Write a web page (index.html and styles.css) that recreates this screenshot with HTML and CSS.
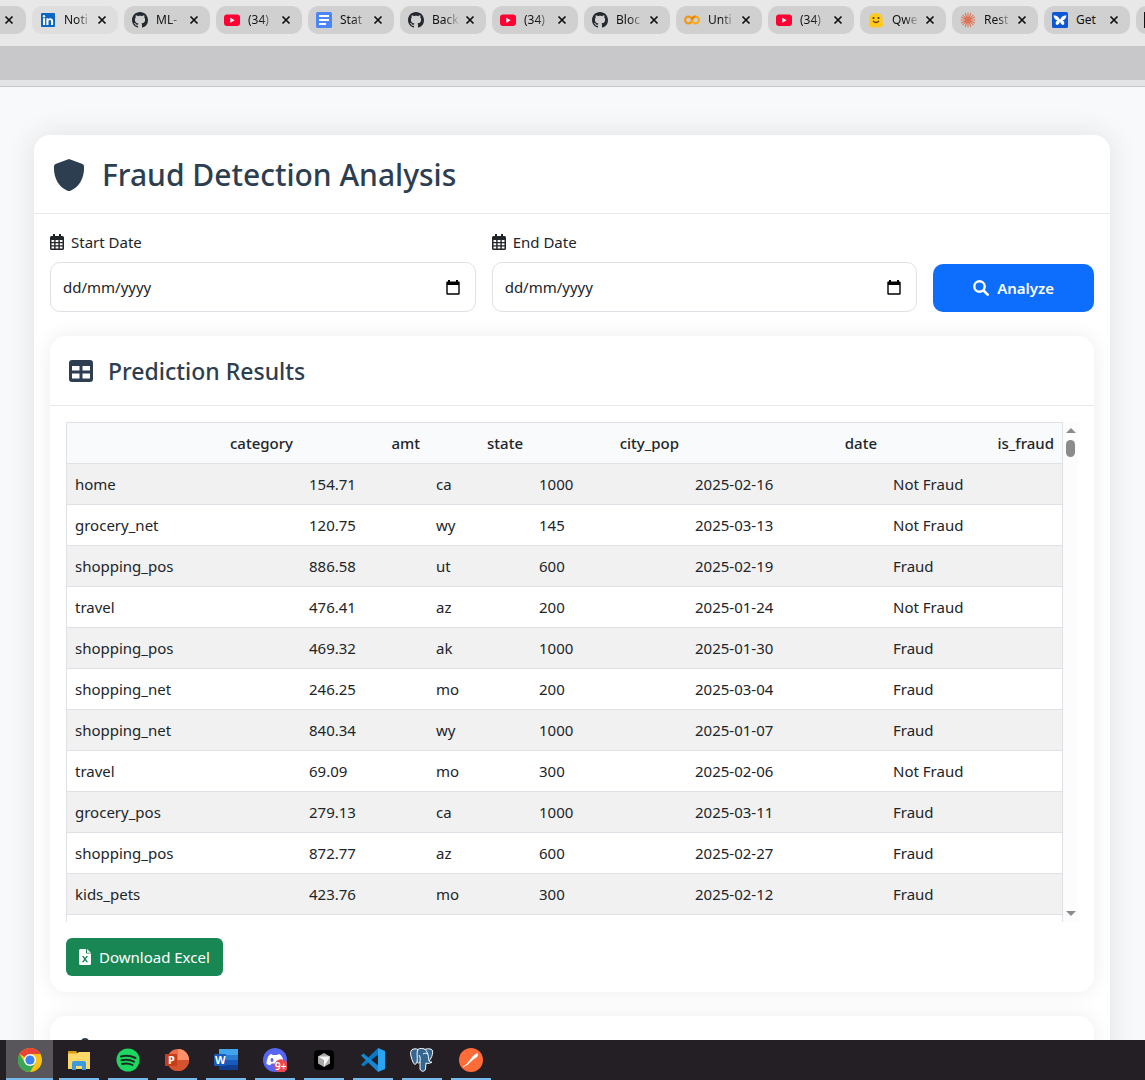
FILE: index.html
```html
<!DOCTYPE html>
<html lang="en">
<head>
<meta charset="utf-8">
<meta name="viewport" content="width=device-width, initial-scale=1">
<title>Fraud Detection Analysis</title>
<link rel="stylesheet" href="styles.css">
</head>
<body>
<svg class="defs" aria-hidden="true">
  <symbol id="close" viewBox="0 0 10 10"><path d="M1.500 1.500l7 7M8.500 1.500l-7 7" stroke="#111" stroke-width="1.700" fill="none"/></symbol>
  <symbol id="github" viewBox="0 0 16 16"><path fill="#24292f" d="M8 0C3.58 0 0 3.58 0 8c0 3.54 2.29 6.53 5.47 7.59.4.07.55-.17.55-.38 0-.19-.01-.82-.01-1.49-2.01.37-2.53-.49-2.69-.94-.09-.23-.48-.94-.82-1.13-.28-.15-.68-.52-.01-.53.63-.01 1.08.58 1.23.82.72 1.21 1.87.87 2.33.66.07-.52.28-.87.51-1.07-1.78-.2-3.64-.89-3.64-3.95 0-.87.31-1.59.82-2.15-.08-.2-.36-1.02.08-2.12 0 0 .67-.21 2.2.82.64-.18 1.32-.27 2-.27s1.36.09 2 .27c1.53-1.04 2.2-.82 2.2-.82.44 1.1.16 1.92.08 2.12.51.56.82 1.27.82 2.15 0 3.07-1.87 3.75-3.65 3.95.29.25.54.73.54 1.48 0 1.07-.01 1.93-.01 2.2 0 .21.15.46.55.38A8 8 0 0 0 16 8c0-4.42-3.58-8-8-8z"/></symbol>
  <symbol id="youtube" viewBox="0 0 16 16"><rect y="2.500" width="16" height="11.500" rx="3" fill="#f03"/><path d="M6.300 5.800v5l4.300-2.500z" fill="#fff"/></symbol>
  <symbol id="calendar" viewBox="0 0 15 16"><path fill="#212529" fill-rule="evenodd" d="M3 0h2v2h4V0h2v2h1.500A1.500 1.500 0 0 1 14 3.500v11a1.500 1.500 0 0 1-1.500 1.500h-11A1.500 1.500 0 0 1 0 14.500v-11A1.500 1.500 0 0 1 1.500 2H3zM1.500 6v2h2.700V6zm4.100 0v2h2.800V6zm4.200 0v2h2.700V6zM1.500 9.200v2h2.700v-2zm4.100 0v2h2.800v-2zm4.200 0v2h2.700v-2zM1.500 12.400v2.100h2.700v-2.100zm4.100 0v2.100h2.800v-2.100zm4.200 0v2.100h2.700v-2.100z"/></symbol>
  <symbol id="picker" viewBox="0 0 14 15"><path fill="#000" fill-rule="evenodd" d="M2 0h2v1.500h6V0h2v1.500h.5A1.200 1.200 0 0 1 13.700 3v10.500a1.200 1.200 0 0 1-1.200 1.200h-11A1.200 1.200 0 0 1 .3 13.500V3a1.200 1.200 0 0 1 1.200-1.500H2zM1.700 5v8.300h10.600V5z"/></symbol>
</svg>
<div class="screen">
  <header class="browser">
    <nav class="tabs" aria-label="Browser tabs">
      <div class="tab tab-first"><button class="close" aria-label="Close tab"><svg><use href="#close"/></svg></button></div>
      <div class="tab tab-light"><svg class="fav" viewBox="0 0 16 16"><rect x="1" y="1" width="14" height="14" rx="1" fill="#0a66c2"/><path fill="#fff" d="M3 6.300h2.100V13H3zM6.400 6.300h2v1c1-1.600 4.700-1.600 4.700 1.700v4H11V9.500c0-2-2.500-1.800-2.500 0V13H6.400z"/><circle cx="4" cy="4.200" r="1.200" fill="#fff"/></svg><span class="label">Noti</span><button class="close" aria-label="Close tab"><svg><use href="#close"/></svg></button></div>
      <div class="tab"><svg class="fav"><use href="#github"/></svg><span class="label">ML-</span><button class="close" aria-label="Close tab"><svg><use href="#close"/></svg></button></div>
      <div class="tab"><svg class="fav"><use href="#youtube"/></svg><span class="label">(34)</span><button class="close" aria-label="Close tab"><svg><use href="#close"/></svg></button></div>
      <div class="tab"><svg class="fav" viewBox="0 0 16 16"><rect width="16" height="16" rx="1.500" fill="#4a86f7"/><path d="M3 4h10M3 8h10M3 12h7" stroke="#fff" stroke-width="1.800"/></svg><span class="label">Stat</span><button class="close" aria-label="Close tab"><svg><use href="#close"/></svg></button></div>
      <div class="tab"><svg class="fav"><use href="#github"/></svg><span class="label">Back</span><button class="close" aria-label="Close tab"><svg><use href="#close"/></svg></button></div>
      <div class="tab"><svg class="fav"><use href="#youtube"/></svg><span class="label">(34)</span><button class="close" aria-label="Close tab"><svg><use href="#close"/></svg></button></div>
      <div class="tab"><svg class="fav"><use href="#github"/></svg><span class="label">Bloc</span><button class="close" aria-label="Close tab"><svg><use href="#close"/></svg></button></div>
      <div class="tab"><svg class="fav" viewBox="0 0 16 16"><g fill="none" stroke-width="2.200"><circle cx="4.500" cy="8" r="3.400" stroke="#f0971b"/><circle cx="11.500" cy="8" r="3.400" stroke="#f9ab1e"/><path d="M8.100 8a3.400 3.400 0 0 1 3.400-3.400" stroke="#e8810a"/></g></svg><span class="label">Unti</span><button class="close" aria-label="Close tab"><svg><use href="#close"/></svg></button></div>
      <div class="tab"><svg class="fav"><use href="#youtube"/></svg><span class="label">(34)</span><button class="close" aria-label="Close tab"><svg><use href="#close"/></svg></button></div>
      <div class="tab"><svg class="fav" viewBox="0 0 16 16"><path d="M1 14c-1-2 0-3 .5-4C0 4 4 1 8 1s8 3 6.500 9c.5 1 1.500 2 .5 4-3 2-11 2-14 0z" fill="#ffca1d"/><circle cx="5.500" cy="6" r="1" fill="#3a3020"/><circle cx="10.500" cy="6" r="1" fill="#3a3020"/><path d="M5 9q3 3 6 0" fill="none" stroke="#6b3b20" stroke-width="1.300"/></svg><span class="label">Qwe</span><button class="close" aria-label="Close tab"><svg><use href="#close"/></svg></button></div>
      <div class="tab"><svg class="fav" viewBox="0 0 16 16"><path d="M8 .5v15M.5 8h15M2.500 2.800l11 10.400M13.500 2.800l-11 10.400M5 1l6 14M11 1L5 15M1 5l14 6M15 5L1 11" stroke="#de7356" stroke-width="1.100"/></svg><span class="label">Rest</span><button class="close" aria-label="Close tab"><svg><use href="#close"/></svg></button></div>
      <div class="tab"><svg class="fav" viewBox="0 0 16 16"><rect width="16" height="16" rx="1.500" fill="#1057d3"/><path fill="#fff" d="M8 8C7 4 3 3 1.500 3.500 2 6 3 8 5.500 8.500 3.500 9 3 11 4.500 13 6.500 13 8 11 8 9c0 2 1.500 4 3.500 4 1.500-2 1-4-1-4.500C13 8 14 6 14.500 3.500 13 3 9 4 8 8z"/></svg><span class="label label-full">Get</span><button class="close" aria-label="Close tab"><svg><use href="#close"/></svg></button></div>
      <div class="tab"><svg class="fav" viewBox="0 0 16 16"><rect width="16" height="16" fill="#161616"/></svg></div>
    </nav>
    <div class="toolbar"></div>
    <div class="bookmarks"></div>
  </header>

  <main class="page">
    <section class="card main-card">
      <div class="card-head">
        <svg class="shield" viewBox="0 0 32 32"><path fill="#2c3e50" d="M16 0l13.500 5A2.500 2.500 0 0 1 31 7.500C31.500 18 27 28 17.500 31.700a4 4 0 0 1-3 0C5 28 .5 18 1 7.500A2.500 2.500 0 0 1 2.500 5z"/></svg>
        <h1>Fraud Detection Analysis</h1>
      </div>
      <div class="card-body">
        <form class="filters">
          <div class="field">
            <label for="start"><svg class="cal"><use href="#calendar"/></svg>Start Date</label>
            <div class="control"><input id="start" type="text" placeholder="dd/mm/yyyy"><button type="button" class="pick" aria-label="Open start date calendar"><svg><use href="#picker"/></svg></button></div>
          </div>
          <div class="field">
            <label for="end"><svg class="cal"><use href="#calendar"/></svg>End Date</label>
            <div class="control"><input id="end" type="text" placeholder="dd/mm/yyyy"><button type="button" class="pick" aria-label="Open end date calendar"><svg><use href="#picker"/></svg></button></div>
          </div>
          <button type="button" class="analyze"><svg viewBox="0 0 16 16"><circle cx="6.500" cy="6.500" r="5.200" fill="none" stroke="#fff" stroke-width="2.400"/><path d="M10.500 10.500l4.200 4.200" stroke="#fff" stroke-width="2.600" stroke-linecap="round"/></svg>Analyze</button>
        </form>

        <section class="card results">
          <div class="card-head sub-head">
            <svg class="grid-icon" viewBox="0 0 24 22"><path fill="#2c3e50" fill-rule="evenodd" d="M3 0h18a3 3 0 0 1 3 3v16a3 3 0 0 1-3 3H3a3 3 0 0 1-3-3V3a3 3 0 0 1 3-3zM3 6v4.500h7.500V6zm10.500 0v4.500H21V6zM3 13.500v5h7.500v-5zm10.500 0v5H21v-5z"/></svg>
            <h2>Prediction Results</h2>
          </div>
          <div class="card-body">
            <div class="scroller">
              <div class="viewport">
                <table>
                  <colgroup><col class="c-category"><col class="c-amt"><col class="c-state"><col class="c-pop"><col class="c-date"><col class="c-fraud"></colgroup>
                  <thead><tr><th>category</th><th>amt</th><th>state</th><th>city_pop</th><th>date</th><th>is_fraud</th></tr></thead>
                  <tbody>
                    <tr><td>home</td><td>154.71</td><td>ca</td><td>1000</td><td>2025-02-16</td><td>Not Fraud</td></tr>
                    <tr><td>grocery_net</td><td>120.75</td><td>wy</td><td>145</td><td>2025-03-13</td><td>Not Fraud</td></tr>
                    <tr><td>shopping_pos</td><td>886.58</td><td>ut</td><td>600</td><td>2025-02-19</td><td>Fraud</td></tr>
                    <tr><td>travel</td><td>476.41</td><td>az</td><td>200</td><td>2025-01-24</td><td>Not Fraud</td></tr>
                    <tr><td>shopping_pos</td><td>469.32</td><td>ak</td><td>1000</td><td>2025-01-30</td><td>Fraud</td></tr>
                    <tr><td>shopping_net</td><td>246.25</td><td>mo</td><td>200</td><td>2025-03-04</td><td>Fraud</td></tr>
                    <tr><td>shopping_net</td><td>840.34</td><td>wy</td><td>1000</td><td>2025-01-07</td><td>Fraud</td></tr>
                    <tr><td>travel</td><td>69.09</td><td>mo</td><td>300</td><td>2025-02-06</td><td>Not Fraud</td></tr>
                    <tr><td>grocery_pos</td><td>279.13</td><td>ca</td><td>1000</td><td>2025-03-11</td><td>Fraud</td></tr>
                    <tr><td>shopping_pos</td><td>872.77</td><td>az</td><td>600</td><td>2025-02-27</td><td>Fraud</td></tr>
                    <tr><td>kids_pets</td><td>423.76</td><td>mo</td><td>300</td><td>2025-02-12</td><td>Fraud</td></tr>
                    <tr><td></td><td></td><td></td><td></td><td></td><td></td></tr>
                  </tbody>
                </table>
              </div>
              <div class="scrollbar" aria-hidden="true">
                <svg class="arrow" viewBox="0 0 10 5"><path d="M5 0l5 5H0z" fill="#8b8b8b"/></svg>
                <div class="thumb"></div>
                <svg class="arrow arrow-down" viewBox="0 0 10 5"><path d="M0 0h10L5 5z" fill="#8b8b8b"/></svg>
              </div>
            </div>
            <button type="button" class="download"><svg viewBox="0 0 12 16"><path fill="#fff" fill-rule="evenodd" d="M1.500 0H7v4.500h5v10A1.500 1.500 0 0 1 10.500 16h-9A1.500 1.500 0 0 1 0 14.500v-13A1.500 1.500 0 0 1 1.500 0zM8 0l4 3.700H8zM3 7l2.100 3L3 13.300h1.700L6 11.200l1.300 2.100H9L6.900 10 9 7H7.300L6 8.900 4.700 7z"/></svg>Download Excel</button>
          </div>
        </section>

        <section class="card">
          <div class="card-head sub-head">
            <svg class="bulb" viewBox="0 0 30 30"><path fill="#2c3e50" d="M12 6a4 4 0 0 1 8 0l7 9v12H5V15z"/></svg>
          </div>
        </section>
      </div>
    </section>
  </main>

  <footer class="taskbar">
    <button class="app active" aria-label="Chrome"><svg viewBox="0 0 24 24"><circle cx="12" cy="12" r="12" fill="#fbc116"/><path d="M12 12L1.600 6A12 12 0 0 1 22.400 6H12z" fill="#ea4335"/><path d="M1.600 6A12 12 0 0 0 12 24l5.200-9L12 12l-5.200 3z" fill="#34a853"/><circle cx="12" cy="12" r="6" fill="#fff"/><circle cx="12" cy="12" r="4.600" fill="#3b82f0"/></svg></button>
    <button class="app" aria-label="File Explorer"><svg viewBox="0 0 24 24"><path d="M1 3h8l2 3H1z" fill="#d99c1a"/><path d="M1 5.500h9L12 4h11v17H1z" fill="#ffd968"/><path d="M5 22v-7q0-2 2-2h10q2 0 2 2v7h-4v-4H9v4z" fill="#3d9bdc"/></svg></button>
    <button class="app" aria-label="Spotify"><svg viewBox="0 0 24 24"><circle cx="12" cy="12" r="11.500" fill="#1ed760"/><path d="M5 8.500q7.500-2 14.500 1.500M5.500 12.300q7-1.800 12.500 1.300M6 16q6-1.500 10.500 1" fill="none" stroke="#1b2a20" stroke-width="2" stroke-linecap="round"/></svg></button>
    <button class="app" aria-label="PowerPoint"><svg viewBox="0 0 24 24"><circle cx="13" cy="12" r="11" fill="#ed6c47"/><path d="M13 1a11 11 0 0 1 11 11H13z" fill="#ff8f6b"/><path d="M2 12h22a11 11 0 0 1-22 0z" fill="#d35230"/><rect y="6" width="12" height="12" rx="1" fill="#c43e1c"/><text x="3" y="16" class="badge">P</text></svg></button>
    <button class="app" aria-label="Word"><svg viewBox="0 0 24 24"><path d="M5 1h19v6H5z" fill="#41a5ee"/><path d="M5 7h19v5H5z" fill="#2b7cd3"/><path d="M5 12h19v5H5z" fill="#185abd"/><path d="M5 17h19v5H5z" fill="#103f91"/><rect y="6" width="12" height="12" rx="1" fill="#185abd"/><text x="1" y="16" class="badge">W</text></svg></button>
    <button class="app" aria-label="Discord"><svg viewBox="0 0 24 24"><circle cx="12" cy="12" r="12" fill="#5865f2"/><path d="M8 6l2 1h4l2-1c3 1 5 6 4.500 10-2 1.500-4 1.500-4 1l-1-1.500h-7L7.500 17c-1 .5-3-.5-4-1C3.500 12 5 7 8 6z" fill="#fff"/><ellipse cx="9" cy="12" rx="1.500" ry="2" fill="#5865f2"/><circle cx="18" cy="18" r="6.800" fill="#ed4850"/><text x="12" y="22" class="count">9+</text></svg></button>
    <button class="app" aria-label="Cursor"><svg viewBox="0 0 24 24"><rect x="2" y="2" width="20" height="20" rx="4" fill="#000"/><path d="M12 5l6 3.500v7L12 19l-6-3.500v-7z" fill="#aaa"/><path d="M6 8.500h12L12 19v-7z" fill="#f4f4f4"/></svg></button>
    <button class="app" aria-label="Visual Studio Code"><svg viewBox="0 0 24 24"><path d="M17 0v6.500L2.500 18.500 0 16.500z" fill="#0879c4"/><path d="M0 7.500L2.500 5.500 17 17.500V24z" fill="#1687d2"/><path d="M17 0l7 3v18l-7 3z" fill="#2aa5f2"/></svg></button>
    <button class="app" aria-label="PostgreSQL"><svg viewBox="0 0 24 24"><path d="M5 .8C-1 1 0 7 3 14c1 3 3 3 4 0 1 2 2 1 3 0v7c1 3 5 3 5.500 0l.5-6c2 1 5 0 6-1-1 0-2 0-3-1 3-3 6-12 1-12-2-.5-4 0-5 .4C12-.2 10-.1 8 1.500 7 1 6 .800 5 .800z" fill="#336791" stroke="#fff"/><path d="M8 1.500C6 4 8 10 7 14M15 1.300c4 4 3 8 4 11.700M10 14c0-3 1-4-1-7M13 6c2-1 4-1 5 0" fill="none" stroke="#fff"/></svg></button>
    <button class="app" aria-label="Postman"><svg viewBox="0 0 24 24"><circle cx="12" cy="12" r="12" fill="#ff6c37"/><path d="M6 18l8-10 4-3q2 1 0 4l-3 2-7 6z" fill="#fff"/><path d="M4 19l6-4" stroke="#fff"/></svg></button>
  </footer>
</div>
</body>
</html>
```
FILE: styles.css
```css
* { box-sizing: border-box; }
body { margin: 0; font-family: "Noto Sans", sans-serif; font-size: 15px; line-height: 24px; color: #212529; }
button, input { font: inherit; color: inherit; }
button { border: 0; padding: 0; background: none; cursor: pointer; }
h1, h2 { margin: 0; font-weight: 500; color: #2c3e50; }
.defs { display: none; }
.screen { display: flex; flex-direction: column; height: 100vh; overflow: hidden; }

.browser { flex: none; background: #e8e8e9; }
.tabs { display: flex; gap: 6px; height: 46px; padding-top: 6px; overflow: hidden; }
.tab { display: flex; align-items: center; flex: none; width: 86px; height: 28px; padding: 0 10px 0 8px; border-radius: 10px; background: #d0d0d0; }
.tab-light { background: #dedede; }
.tab-first { width: 26px; padding: 0 10px 0 3px; border-radius: 0 10px 10px 0; }
.fav { flex: none; width: 16px; height: 16px; }
.label { flex: 1; margin: 0 3px 0 8px; white-space: nowrap; font-size: 12px; color: #111; -webkit-mask-image: linear-gradient(90deg, #000 45%, transparent 95%); mask-image: linear-gradient(90deg, #000 45%, transparent 95%); }
.label-full { -webkit-mask-image: none; mask-image: none; }
.close { display: flex; flex: none; align-items: center; justify-content: center; width: 12px; height: 12px; }
.close svg { width: 10px; height: 10px; }
.toolbar { height: 34px; background: #c8c8ca; }
.bookmarks { height: 7px; background: #e3e4e5; border-bottom: 1px solid #c6c7c9; }

.page { flex: 1; min-height: 0; overflow: hidden; padding: 48px 35px 0 34px; background: #f8f9fb; }
.card { background: #fff; border-radius: 16px; box-shadow: 0 0 20px rgba(0, 0, 0, .08); }
.main-card { box-shadow: 0 0 30px rgba(0, 0, 0, .1); }
.card-head { display: flex; align-items: center; gap: 17px; height: 79px; padding: 0 19px; border-bottom: 1px solid #e8e9ea; }
.main-card > .card-head { padding-top: 2px; }
.shield { width: 32px; height: 32px; }
h1 { font-size: 30px; line-height: 40px; }
.card-body { padding: 16px; }

.filters { display: grid; grid-template-columns: repeat(12, 1fr); gap: 16px; align-items: end; margin-bottom: 24px; }
.field { grid-column: span 5; }
.field label { display: flex; align-items: center; gap: 6px; margin-bottom: 8px; }
.cal { width: 15px; height: 16px; }
.control { display: flex; align-items: center; height: 50px; padding: 0 15px 0 12px; border: 1px solid #dee2e6; border-radius: 10px; }
.control input { flex: 1; min-width: 0; padding: 0; border: 0; outline: 0; background: none; }
.control input::placeholder { color: #212529; opacity: 1; }
.pick { display: flex; }
.pick svg { width: 14px; height: 15px; }
.analyze { grid-column: span 2; display: flex; align-items: center; justify-content: center; gap: 8px; height: 48px; border-radius: 10px; background: #0d6efd; color: #fff; font-weight: 600; }
.analyze svg { width: 16px; height: 16px; }

.results { margin-bottom: 24px; }
.sub-head { height: 70px; gap: 15px; }
.grid-icon { width: 24px; height: 22px; }
h2 { font-size: 23px; line-height: 32px; }
.scroller { display: flex; height: 500px; margin-bottom: 16px; }
.viewport { flex: 1; min-width: 0; overflow: hidden; }
table { width: 100%; table-layout: fixed; border-collapse: separate; border-spacing: 0; border: solid #dee2e6; border-width: 1px 1px 0; }
.c-category { width: 234px; }
.c-amt { width: 127px; }
.c-state { width: 103px; }
.c-pop { width: 156px; }
.c-date { width: 198px; }
th, td { height: 41px; padding: 8px; border-bottom: 1px solid #dee2e6; text-align: left; }
th { background: #f8fafc; font-weight: 500; text-align: right; }
tbody tr:nth-child(odd) td { background: #f1f1f1; }
.scrollbar { display: flex; flex-direction: column; align-items: center; width: 15px; padding: 6px 0; background: #fcfcfc; }
.arrow { width: 10px; height: 5px; }
.thumb { width: 9px; height: 17px; margin-top: 7px; border-radius: 5px; background: #8b8b8b; }
.arrow-down { margin-top: auto; }
.download { display: flex; align-items: center; gap: 8px; height: 38px; padding: 0 13px; border-radius: 6px; background: #198754; color: #fff; }
.download svg { width: 12px; height: 16px; }
.bulb { width: 30px; height: 30px; }

.taskbar { display: flex; flex: none; gap: 9px; height: 40px; padding: 0 10px; background: #231f25; }
.app { display: flex; align-items: center; justify-content: center; width: 40px; height: 40px; box-shadow: inset 0 -2px #76b9ed; }
.app svg { width: 24px; height: 24px; }
.active { width: 47px; margin: 0 -3px 0 -4px; background: #59565b; }
.badge { font-size: 11px; font-weight: 700; fill: #fff; }
.count { font-size: 10px; font-weight: 600; fill: #fff; }
```
